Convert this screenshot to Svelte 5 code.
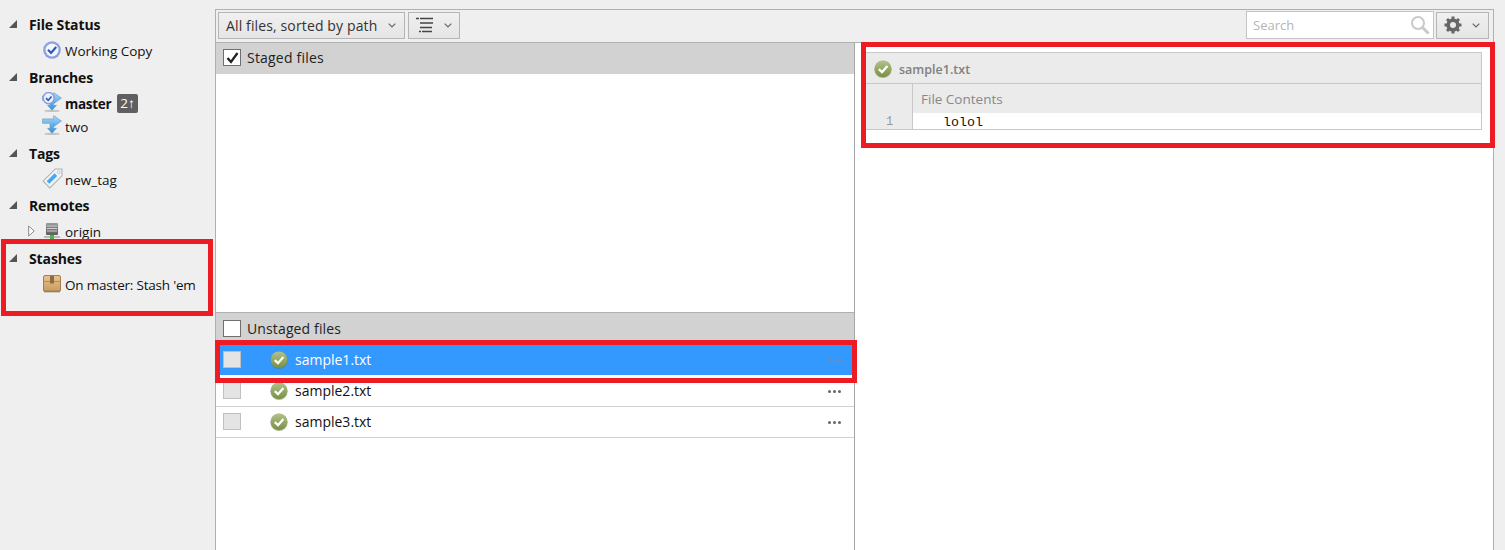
<script>
  const rows = ['sample1.txt', 'sample2.txt', 'sample3.txt'];
</script>

{#snippet okIcon(size)}
  <svg class="ok" width={size} height={size} viewBox="0 0 18 18" aria-hidden="true">
    <circle cx="9" cy="9.300" r="8.700" fill="#5f7040" opacity=".45" />
    <circle cx="9" cy="8.800" r="8.400" fill="url(#green)" />
    <path d="M4.800 9.200l3.200 3 5.400-6.200" fill="none" stroke="#fff" stroke-width="2.300" />
  </svg>
{/snippet}

{#snippet expander()}
  <svg class="tri" width="8" height="8" viewBox="0 0 8 8" aria-hidden="true"><path d="M8 0v8H0z" fill="#555" /></svg>
{/snippet}

{#snippet chevron()}
  <svg class="chev" width="8" height="5" viewBox="0 0 8 5" aria-hidden="true"><path d="M.7.7L4 4 7.300.7" fill="none" stroke="#666" stroke-width="1.200" /></svg>
{/snippet}

{#snippet branchArrows()}
  <ellipse cx="9" cy="17" rx="7" ry="1" fill="#999" opacity=".5" />
  <path d="M.5 3.500h10V.5l7 5-7 5V7.500h-.3v4.500H13l-4 4.500-4-4.500h2.200V7.500H.5z" fill="url(#blue)" stroke="#5a93c4" stroke-width=".5" />
{/snippet}

<div class="app">
  <svg class="defs" width="0" height="0" aria-hidden="true">
    <defs>
      <linearGradient id="green" x1="0" y1="0" x2="0" y2="1"><stop offset="0" stop-color="#b2c38c" /><stop offset="1" stop-color="#77903f" /></linearGradient>
      <linearGradient id="blue" x1="0" y1="0" x2="0" y2="1"><stop offset="0" stop-color="#a6d8f5" /><stop offset="1" stop-color="#2f90dc" /></linearGradient>
      <linearGradient id="box" x1="0" y1="0" x2="0" y2="1"><stop offset="0" stop-color="#e9c391" /><stop offset="1" stop-color="#c99a5e" /></linearGradient>
      <linearGradient id="srv" x1="0" y1="0" x2="0" y2="1"><stop offset="0" stop-color="#9a9a9a" /><stop offset="1" stop-color="#5d5d5d" /></linearGradient>
    </defs>
  </svg>

  <aside class="sidebar">
    <section class="group tall">
      <h3>{@render expander()}File Status</h3>
      <div class="item">
        <svg class="icon" width="18" height="18" viewBox="0 0 18 18" aria-hidden="true">
          <circle cx="9" cy="9" r="8.800" fill="#8d9fe0" />
          <circle cx="9" cy="9" r="6.500" fill="#f4f6fd" />
          <path d="M5 8.800l3 3.100 5.200-5.800" fill="none" stroke="#2d55c0" stroke-width="2.200" />
        </svg>
        <span>Working Copy</span>
      </div>
    </section>
    <section class="group tall">
      <h3>{@render expander()}Branches</h3>
      <div class="item">
        <svg class="icon branch" width="20" height="20" viewBox="0 0 18 18" aria-hidden="true">
          {@render branchArrows()}
          <circle cx="6" cy="5.500" r="5" fill="#eef1fb" stroke="#8d9fe0" stroke-width="1.400" />
          <path d="M3.600 5.500l2 2 3-3.500" fill="none" stroke="#2d55c0" stroke-width="1.400" />
        </svg>
        <strong>master</strong>
        <span class="badge">2↑</span>
      </div>
      <div class="item">
        <svg class="icon branch" width="20" height="20" viewBox="0 0 18 18" aria-hidden="true">{@render branchArrows()}</svg>
        <span>two</span>
      </div>
    </section>
    <section class="group">
      <h3>{@render expander()}Tags</h3>
      <div class="item">
        <svg class="icon tag" width="21" height="21" viewBox="0 0 20 20" aria-hidden="true">
          <path d="M12.500 1h6.500v6.500L7.500 19 1 12.500z" fill="#f0f3f6" stroke="#a9b3ba" />
          <path d="M4.500 12.500l7.500-7.500 2.500 2.500-7.500 7.500z" fill="#4aa7ea" />
          <circle cx="16" cy="4" r="1.300" fill="#fff" stroke="#a9b3ba" stroke-width=".7" />
        </svg>
        <span>new_tag</span>
      </div>
    </section>
    <section class="group tall">
      <h3>{@render expander()}Remotes</h3>
      <div class="item">
        <svg class="open" width="7" height="12" viewBox="0 0 7 12" aria-hidden="true"><path d="M.7 1v10l5.500-5z" fill="#fff" stroke="#888" /></svg>
        <svg class="icon" width="18" height="18" viewBox="0 0 18 18" aria-hidden="true">
          <rect x="3" y="1" width="12" height="12" rx="1" fill="url(#srv)" />
          <path d="M4 4h10M4 6.500h10M4 9h10" stroke="#cfcfcf" />
          <rect x="1" y="14" width="16" height="2" fill="#bbb" />
          <rect x="7" y="13" width="4" height="4" fill="#4db14d" />
        </svg>
        <span>origin</span>
      </div>
    </section>
    <section class="group">
      <h3>{@render expander()}Stashes</h3>
      <div class="item">
        <svg class="icon" width="18" height="18" viewBox="0 0 18 18" aria-hidden="true">
          <rect x=".5" y=".5" width="17" height="16" rx="1.500" fill="url(#box)" stroke="#a67f4d" />
          <rect x="1" y="15.500" width="16" height="2" fill="#8a7c69" opacity=".6" />
          <path d="M1 6.500h16" stroke="#b88d57" />
          <rect x="7" y="1" width="4" height="7.500" fill="#8f6a3c" />
        </svg>
        <span class="tight">On master: Stash 'em</span>
      </div>
    </section>
  </aside>

  <main class="main">
    <header class="toolbar">
      <button class="btn sort"><span>All files, sorted by path</span>{@render chevron()}</button>
      <button class="btn view">
        <svg width="17" height="16" viewBox="0 0 17 16" aria-hidden="true">
          <path d="M0 1.500h3M4 1.500h13M4 6h13M4 10.500h12M3 14.500h2M6 14.500h10" stroke="#444" stroke-width="1.400" />
        </svg>
        {@render chevron()}
      </button>
      <div class="spacer"></div>
      <label class="search">
        <input type="text" placeholder="Search" />
        <svg width="20" height="20" viewBox="0 0 20 20" aria-hidden="true">
          <circle cx="8" cy="8" r="6" fill="#fff" stroke="#c9c9c9" stroke-width="2" />
          <path d="M12.500 12.500l6 6" stroke="#c9c9c9" stroke-width="3" />
        </svg>
      </label>
      <button class="btn gear">
        <svg width="18" height="18" viewBox="0 0 18 18" aria-hidden="true">
          <circle cx="9" cy="9" r="4.800" fill="none" stroke="#666" stroke-width="3.600" />
          <path d="M9 .5v17M.5 9h17M3 3l12 12M15 3L3 15" stroke="#666" stroke-width="3" stroke-dasharray="3.200 10.600" />
        </svg>
        {@render chevron()}
      </button>
    </header>
    <div class="panes">
      <div class="files">
        <div class="staged">
          <div class="head first">
            <span class="cb checked">
              <svg width="15" height="14" viewBox="0 0 15 14" aria-hidden="true"><path d="M2.500 7l3.500 4 6.500-9" fill="none" stroke="#222" stroke-width="2.300" /></svg>
            </span>
            Staged files
          </div>
        </div>
        <div class="unstaged">
          <div class="head second"><span class="cb"></span>Unstaged files</div>
          {#each rows as name, i}
            <div class="row" class:selected={i === 0}>
              <span class="cb off"></span>
              {@render okIcon(18)}
              <span class="name">{name}</span>
              <span class="dots"><i></i><i></i><i></i></span>
            </div>
          {/each}
        </div>
      </div>
      <div class="diff">
        <div class="card">
          <div class="card-title">{@render okIcon(18)}<span>sample1.txt</span></div>
          <div class="hunk"><div class="gutter"></div><div class="hunk-title">File Contents</div></div>
          <div class="line"><div class="gutter num">1</div><code>lolol</code></div>
        </div>
      </div>
    </div>
  </main>

  <div class="mark mark-stash"></div>
  <div class="mark mark-row"></div>
  <div class="mark mark-card"></div>
</div>

<style>
  :global(body) { margin: 0; background: #efefef; }
  .app {
    position: relative;
    display: flex;
    width: 1505px;
    height: 550px;
    overflow: hidden;
    background: #efefef;
    color: #111;
    font: 14px "Open Sans", "Noto Sans", sans-serif;
  }
  .defs { position: absolute; }

  .sidebar { box-sizing: border-box; width: 215px; padding-top: 11px; flex: none; }
  .group { padding-bottom: 1px; }
  .group.tall { padding-bottom: 2px; }
  h3 {
    display: flex;
    align-items: center;
    height: 26px;
    margin: 0 0 2px;
    padding-left: 9px;
    font-size: 14px;
    font-weight: 700;
    letter-spacing: -.12px;
  }
  .tri { margin-right: 12px; }
  .item {
    position: relative;
    display: flex;
    align-items: center;
    height: 23px;
    padding-left: 65px;
    font-size: 13.500px;
    white-space: nowrap;
  }
  .tight { letter-spacing: -.2px; }
  .icon { position: absolute; left: 43px; top: 2px; }
  .icon.branch { left: 42px; top: 0; }
  .icon.tag { left: 42px; top: 0; }
  .open { position: absolute; left: 28px; top: 5px; }
  .item strong { font-weight: 700; letter-spacing: -.3px; }
  .badge {
    margin-left: 6px;
    padding: 0 3px;
    height: 19px;
    line-height: 19px;
    border-radius: 2px;
    background: #5f5f5f;
    color: #fff;
  }

  .main {
    flex: 1;
    display: flex;
    flex-direction: column;
    margin: 9px 11px 0 0;
    border: 1px solid #b0b0b0;
    border-bottom: 0;
    min-width: 0;
  }
  .toolbar {
    box-sizing: border-box;
    display: flex;
    align-items: center;
    height: 33px;
    padding: 1px 4px 3px 2px;
    border-bottom: 1px solid #b0b0b0;
    background: #efefef;
  }
  .btn {
    box-sizing: border-box;
    display: flex;
    align-items: center;
    height: 27px;
    padding: 0;
    border: 1px solid #b5b5b5;
    background: linear-gradient(#f0f0f0, #e5e5e5);
    color: #222;
    font: inherit;
  }
  .sort { width: 187px; padding-left: 7px; gap: 11px; color: #333; letter-spacing: .13px; }
  .view { width: 52px; margin-left: 3px; padding-left: 7px; gap: 11px; }
  .spacer { flex: 1; }
  .search {
    box-sizing: border-box;
    display: flex;
    align-items: center;
    width: 188px;
    height: 28px;
    margin-right: 2px;
    padding-right: 3px;
    border: 1px solid #c4c4c4;
    background: #fff;
  }
  .search input {
    flex: 1;
    min-width: 0;
    border: 0;
    outline: 0;
    padding: 0 0 0 6px;
    background: transparent;
    font: 13px "Open Sans", sans-serif;
  }
  .search input::placeholder { color: #b5b5b5; opacity: 1; }
  .gear { width: 53px; padding-left: 7px; gap: 10px; }

  .panes { flex: 1; display: flex; min-height: 0; background: #fff; }
  .files { width: 638px; flex: none; border-right: 1px solid #a5a5a5; display: flex; flex-direction: column; }
  .staged { height: 269px; border-bottom: 1px solid #b0b0b0; flex: none; }
  .head {
    box-sizing: border-box;
    display: flex;
    align-items: center;
    height: 31px;
    padding-left: 7px;
    background: #d2d2d2;
    color: #222;
  }
  .head.first { padding-bottom: 2px; letter-spacing: .2px; }
  .head.second { height: 32px; padding-bottom: 1px; letter-spacing: .13px; }
  .cb {
    box-sizing: border-box;
    display: inline-flex;
    align-items: center;
    justify-content: center;
    width: 18px;
    height: 17px;
    margin-right: 6px;
    flex: none;
    border: 1px solid #6f6f6f;
    background: #fff;
  }
  .row {
    position: relative;
    box-sizing: border-box;
    display: flex;
    align-items: center;
    height: 31px;
    padding: 0 0 1px 7px;
    border-bottom: 1px solid #d2d2d2;
    background: #fff;
  }
  .row.selected { background: linear-gradient(#3399ff 0 30px, #fff 30px); border-bottom-color: #fff; color: #fff; }
  .cb.off { border-color: #c0c0c0; background: #e4e4e4; margin-right: 29px; }
  .name { margin-left: 7px; }
  .dots { position: absolute; right: 13px; top: 14px; display: flex; gap: 2px; }
  .dots i { width: 3px; height: 3px; border-radius: 50%; background: #666; }
  .selected .dots i { background: #7f8aa0; }

  .diff { flex: 1; min-width: 0; padding: 9px 11px 0 10px; background: #fff; }
  .card { border: 1px solid #c8c8c8; border-left: 0; color: #888; }
  .card-title {
    box-sizing: border-box;
    display: flex;
    align-items: center;
    gap: 7px;
    height: 31px;
    padding: 2px 0 0 9px;
    border-bottom: 1px solid #c8c8c8;
    background: #ebebeb;
    font-size: 12.500px;
    font-weight: 600;
    color: #808080;
  }
  .hunk { display: flex; height: 29px; background: #ebebeb; }
  .gutter { box-sizing: border-box; width: 48px; flex: none; border-right: 1px solid #c8c8c8; }
  .hunk-title { padding: 6px 0 0 8px; font-size: 13.500px; }
  .line { display: flex; height: 16px; background: #fff; }
  .num {
    padding: 2px 0 0 21px;
    background: #ebebeb;
    font: 12px/14px "Liberation Mono", monospace;
    color: #999;
  }
  code {
    margin-left: 30px;
    padding-top: 2px;
    color: #111;
    font: 13.300px/15px "Liberation Mono", monospace;
  }

  .mark { position: absolute; box-sizing: border-box; border: 5px solid #ed1c24; pointer-events: none; }
  .mark-stash { left: 1px; top: 239px; width: 212px; height: 77px; }
  .mark-row { left: 215px; top: 340px; width: 642px; height: 43px; }
  .mark-card { left: 861px; top: 42px; width: 634px; height: 106px; }
</style>
